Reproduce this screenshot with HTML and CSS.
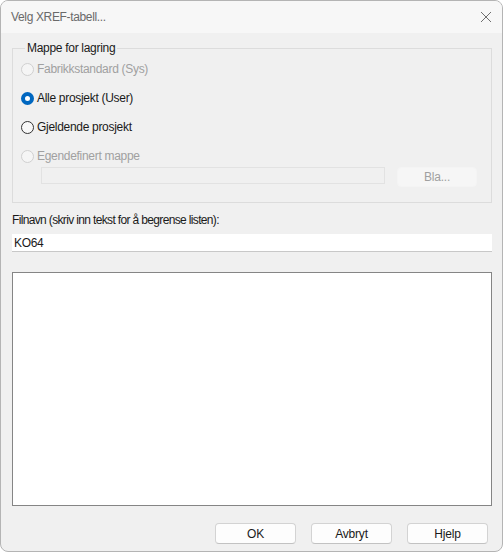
FILE: index.html
```html
<!DOCTYPE html>
<html lang="no">
<head>
<meta charset="utf-8">
<title>Velg XREF-tabell...</title>
<link rel="stylesheet" href="styles.css">
</head>
<body>
<div class="window">
  <div class="titlebar">
    <span class="title">Velg XREF-tabell...</span>
    <svg class="close" width="12" height="12" viewBox="0 0 12 12"><path d="M1 1 L11 11 M11 1 L1 11" stroke="#6f6f6f" stroke-width="1" fill="none"/></svg>
  </div>
  <div class="content">
    <fieldset class="group">
      <legend class="legend">Mappe for lagring</legend>
      <div class="radio-row disabled"><span class="radio"></span><span>Fabrikkstandard (Sys)</span></div>
      <div class="radio-row"><span class="radio checked"></span><span>Alle prosjekt (User)</span></div>
      <div class="radio-row"><span class="radio"></span><span>Gjeldende prosjekt</span></div>
      <div class="radio-row disabled"><span class="radio"></span><span>Egendefinert mappe</span></div>
      <div class="path-row">
        <div class="path-field"></div>
        <div class="btn btn-disabled">Bla...</div>
      </div>
    </fieldset>
    <div class="label">Filnavn (skriv inn tekst for å begrense listen):</div>
    <div class="textbox">KO64</div>
    <div class="listbox"></div>
    <div class="buttons">
      <div class="btn">OK</div>
      <div class="btn">Avbryt</div>
      <div class="btn">Hjelp</div>
    </div>
  </div>
</div>
</body>
</html>
```

FILE: styles.css
```css
html, body {
  margin: 0;
  padding: 0;
  background: #ffffff;
}
body {
  font-family: "Liberation Sans", Arial, sans-serif;
  font-size: 12px;
  color: #1a1a1a;
}
.window {
  width: 503px;
  height: 552px;
  box-sizing: border-box;
  border: 1px solid #b4b4b4;
  border-radius: 8px;
  background: #f0f0f0;
  overflow: hidden;
  display: flex;
  flex-direction: column;
}
.titlebar {
  height: 32px;
  flex: none;
  background: #f7f7f7;
  display: flex;
  align-items: center;
  justify-content: space-between;
  padding: 0 10px 0 10px;
}
.title {
  color: #6a6a6a;
  font-size: 12px;
  letter-spacing: -0.35px;
}
.content {
  flex: 1;
  display: flex;
  flex-direction: column;
  padding: 8px 10px 0 11px;
}
.group {
  margin: 0;
  border: 1px solid #dcdcdc;
  padding: 4px 13px 15px 8px;
  display: flex;
  flex-direction: column;
  gap: 9px;
}
.legend {
  padding: 0 2px;
  margin-left: 4px;
  line-height: 14px;
  color: #1a1a1a;
  letter-spacing: -0.3px;
}
.radio-row {
  height: 20px;
  display: flex;
  align-items: center;
  gap: 3px;
  letter-spacing: -0.3px;
}
.radio-row.disabled {
  color: #a0a0a0;
}
.radio {
  width: 13px;
  height: 13px;
  box-sizing: border-box;
  border-radius: 50%;
  border: 1px solid #333333;
  background: #f7f7f7;
  flex: none;
}
.radio-row.disabled .radio {
  border-color: #d0d0d0;
  background: #f5f5f5;
}
.radio.checked {
  border: 4px solid #0067c0;
  background: #ffffff;
}
.path-row {
  margin-top: -8px;
  display: flex;
  align-items: flex-start;
  gap: 12px;
  padding-left: 20px;
}
.path-field {
  width: 344px;
  height: 17px;
  box-sizing: border-box;
  border: 1px solid #e2e2e2;
  background: #f0f0f0;
}
.btn {
  width: 81px;
  height: 21px;
  box-sizing: border-box;
  border: 1px solid #d3d3d3;
  border-bottom-color: #c2c2c2;
  border-radius: 4px;
  background: #fdfdfd;
  display: flex;
  align-items: center;
  justify-content: center;
  letter-spacing: -0.2px;
}
.btn-disabled {
  width: 80px;
  height: 20px;
  border: 1px solid #f4f4f4;
  background: #f6f6f6;
  color: #a0a0a0;
}
.label {
  margin-top: 10px;
  line-height: 14px;
  letter-spacing: -0.65px;
}
.textbox {
  margin-top: 7px;
  height: 18px;
  box-sizing: border-box;
  background: #ffffff;
  border-bottom: 1px solid #c8c8c8;
  padding-left: 2px;
  display: flex;
  align-items: center;
  letter-spacing: -0.3px;
}
.listbox {
  margin-top: 20px;
  height: 234px;
  box-sizing: border-box;
  background: #ffffff;
  border: 1px solid #858585;
}
.buttons {
  margin-top: 17px;
  display: flex;
  justify-content: flex-end;
  gap: 15px;
  padding-right: 4px;
}
```
